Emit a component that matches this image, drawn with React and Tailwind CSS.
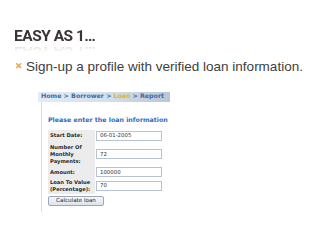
import React from 'react';

const rows = [
  { label: ['Start Date:'], value: '06-01-2005', h: 'h-[12px]' },
  { label: ['Number Of', 'Monthly', 'Payments:'], value: '72', h: 'h-[25px]' },
  { label: ['Amount:'], value: '100000', h: 'h-[11px]' },
  { label: ['Loan To Value', '(Percentage):'], value: '70', h: 'h-[16px]' },
];

const LoanForm = () => (
  <div className="ml-[38px] mt-[18px] w-[132px] font-['DejaVu_Sans',sans-serif]">
    {/* breadcrumb */}
    <div className="h-[10px] flex items-center pl-[3px] bg-gradient-to-r from-[#e4ebf3] via-[#d6e0ec] to-[#b9c6d6] text-[6.3px] font-bold text-[#3a6aa8] leading-none whitespace-nowrap">
      Home &gt; Borrower &gt; <span className="text-[#e0b030] mx-[2px]">Loan</span> &gt; Report
    </div>
    <div className="ml-[3px] border-l border-[#d8dde4] pl-[6px] pt-[15px] pb-[6px]">
      <div className="text-[6.3px] font-bold text-[#2e6db8] leading-none whitespace-nowrap">
        Please enter the loan information
      </div>
      <div className="mt-[7px] flex flex-col w-[114px]">
        {rows.map((r) => (
          <div key={r.value} className={`flex ${r.h}`}>
            <div className="w-[47px] bg-[#ececec] flex flex-col justify-center pl-[2px] text-[5.2px] font-bold text-[#2a2a2a] leading-[7px]">
              {r.label.map((l) => (
                <span key={l} className="whitespace-nowrap">{l}</span>
              ))}
            </div>
            <div className="flex-1 flex items-center pl-[1px]">
              <div className="w-[66px] h-[10px] border border-[#b8c3d2] bg-white flex items-center pl-[3px] text-[5.4px] text-[#333] leading-none">
                {r.value}
              </div>
            </div>
          </div>
        ))}
        <div className="mt-[2px] w-[56px] h-[10px] border border-[#9aa8ba] rounded-[2px] bg-gradient-to-b from-[#f6f8fb] to-[#dde3ea] flex items-center justify-center text-[5.6px] text-[#222] leading-none">
          Calculate loan
        </div>
      </div>
    </div>
  </div>
);

export default function App() {
  return (
    <div className="w-[320px] h-[240px] bg-white overflow-hidden relative">
      <div className="pl-[14px] pt-[23px] h-[60px]">
        <div className="inline-block text-[15.5px] leading-[16px] font-bold text-[#3b3434] font-['Roboto',sans-serif] tracking-[-0.5px] [-webkit-box-reflect:below_0px_linear-gradient(transparent_50%,rgba(255,255,255,0.22))]">
          EASY AS 1…
        </div>
      </div>
      <div className="flex items-center pl-[15px] font-['Liberation_Sans',sans-serif]">
        <span className="text-[#e8a33a] text-[9px] font-bold w-[11px] leading-none">✕</span>
        <span className="text-[13.5px] text-[#404040] leading-none whitespace-nowrap">
          Sign-up a profile with verified loan information.
        </span>
      </div>
      <LoanForm />
    </div>
  );
}
